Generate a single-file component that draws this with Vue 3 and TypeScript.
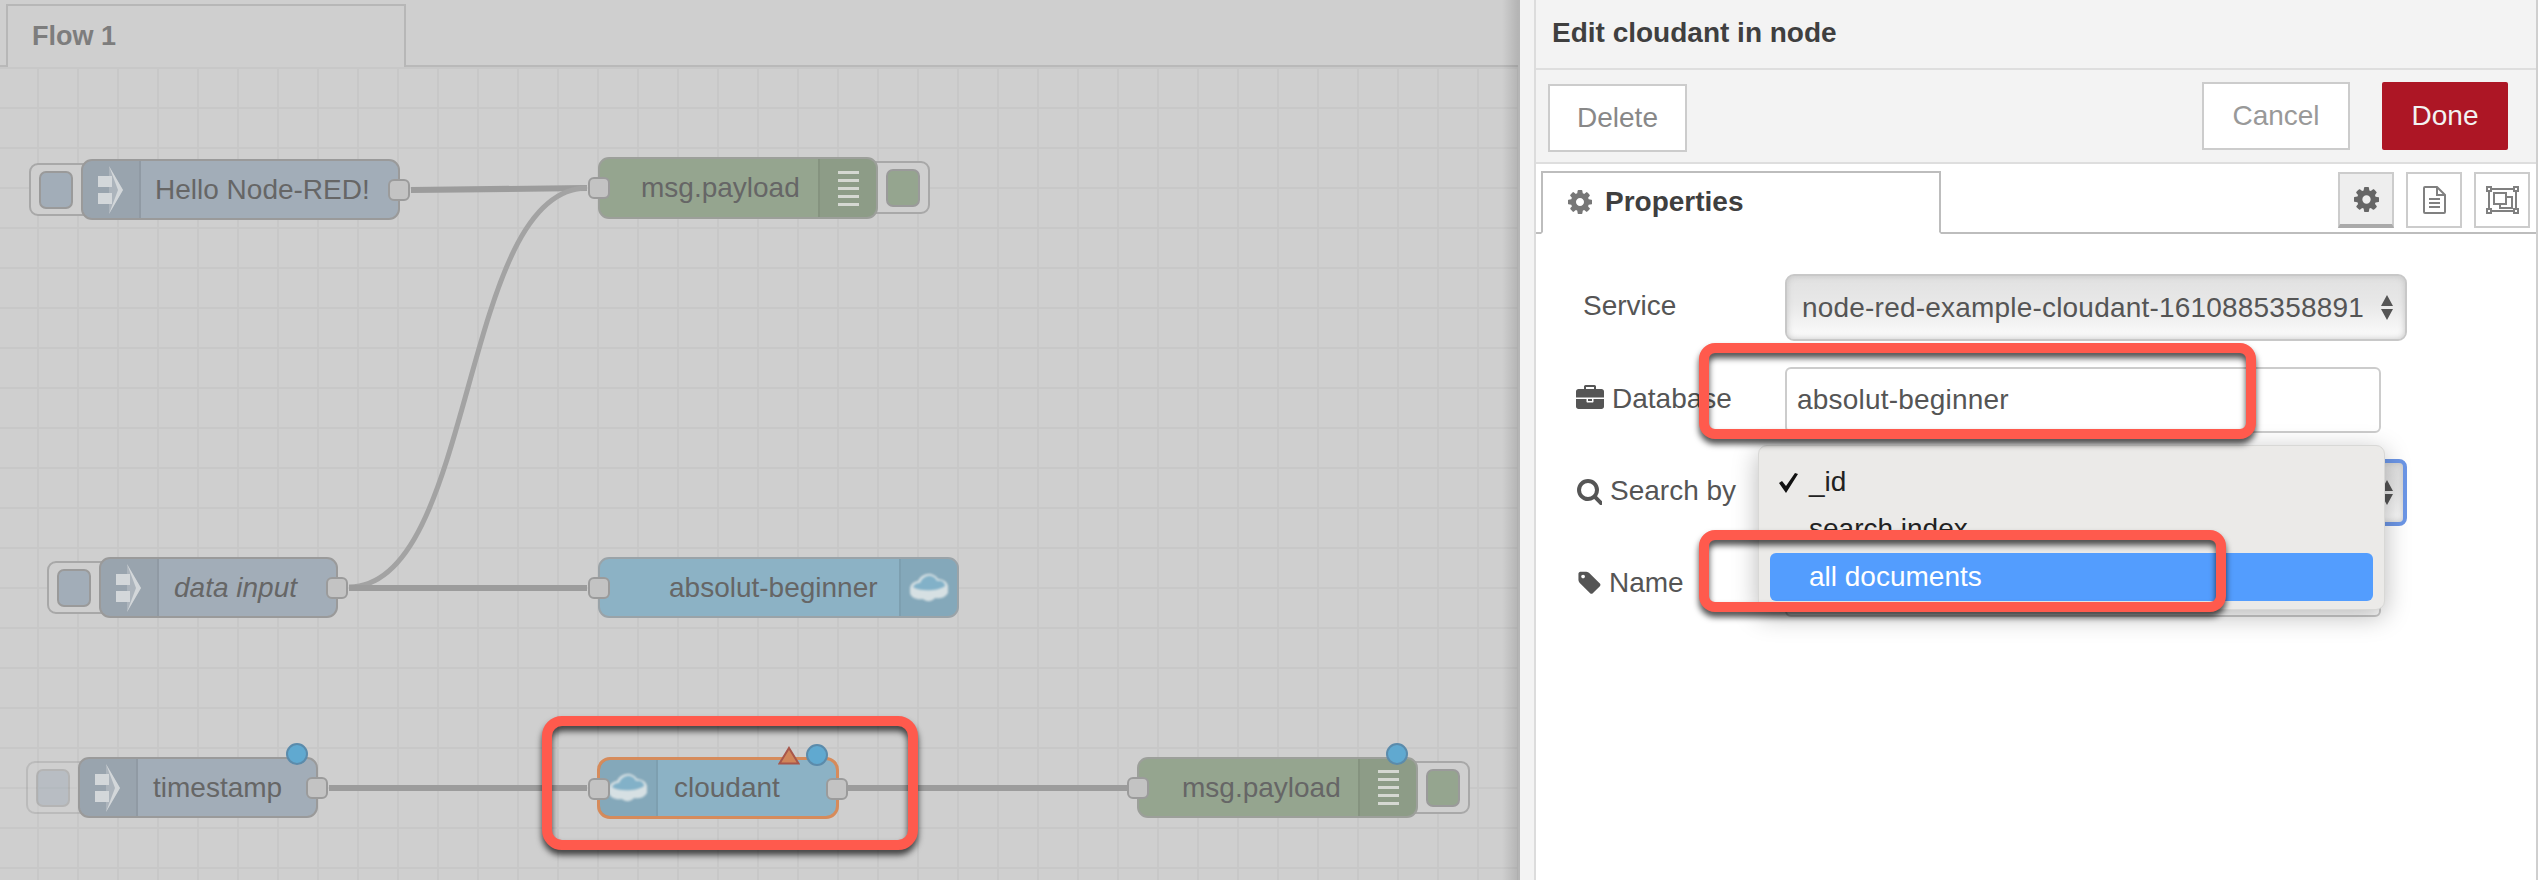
<template>
  <div class="app">
    <div class="canvas">
      <div class="tab-bar">
        <div class="flow-tab">Flow 1</div>
      </div>
      <svg class="wires" width="1520" height="880">
        <path d="M411 190 L587 188" class="wire" />
        <path d="M349 587 C476 587 460 188 587 188" class="wire thin" />
        <path d="M349 588 L587 588" class="wire" />
        <path d="M329 788 L587 788" class="wire" />
        <path d="M848 788 L1127 788" class="wire" />
      </svg>
      <div
        v-for="node in nodes"
        :key="node.id"
        class="node"
        :class="[node.kind, { selected: node.selected }]"
        :style="{ left: node.x + 'px', top: node.y + 'px', width: node.w + 'px', height: node.h + 'px' }"
      >
        <div v-if="node.button" class="node-button" :class="[node.button, { faded: node.faded }]">
          <span class="node-button-inner"></span>
        </div>
        <div v-if="node.iconSide === 'left'" class="icon-cell left">
          <svg v-if="node.icon === 'inject'" width="26" height="48" viewBox="0 0 26 48">
            <path d="M11 0 L25 24 L11 48 Z" fill="#d0d4d8" fill-opacity="0.35" />
            <rect x="0" y="10" width="14" height="11" fill="#d3d7da" />
            <rect x="0" y="27" width="14" height="11" fill="#d3d7da" />
            <path d="M11 0 L25 24 L11 48 L20 24 Z" fill="#d3d7da" />
          </svg>
          <svg v-else class="cloud" width="40" height="30" viewBox="0 0 40 30">
            <path :d="cloudOuter" fill="#d6e0e3" />
            <path :d="cloudInner" fill="#82b1c8" />
          </svg>
        </div>
        <div class="node-label" :class="{ italic: node.italic }" :style="{ paddingLeft: node.textPad + 'px' }">{{ node.label }}</div>
        <div v-if="node.iconSide === 'right'" class="icon-cell right">
          <div v-if="node.icon === 'debug'" class="bars">
            <i v-for="n in 5" :key="n"></i>
          </div>
          <svg v-else class="cloud" width="40" height="30" viewBox="0 0 40 30">
            <path :d="cloudOuter" fill="#d6e0e3" />
            <path :d="cloudInner" fill="#82b1c8" />
          </svg>
        </div>
        <span v-if="node.portIn" class="port in"></span>
        <span v-if="node.portOut" class="port out"></span>
        <svg v-if="node.warn" class="warn" width="22" height="19" viewBox="0 0 22 19">
          <path d="M11 2 L20.5 17.5 L1.5 17.5 Z" fill="#d0855a" stroke="#a8564a" stroke-width="2" />
        </svg>
        <span v-if="node.dot" class="dot"></span>
      </div>
    </div>

    <div class="tray">
      <div class="editor">
        <div class="editor-title">Edit cloudant in node</div>
        <div class="toolbar">
          <button class="btn delete">Delete</button>
          <button class="btn cancel">Cancel</button>
          <button class="btn done">Done</button>
        </div>
        <div class="tabs">
          <div class="tab">
            <svg width="24" height="24" viewBox="128 128 1536 1536"><path :d="cogPath" fill="#777" /></svg>
            <span>Properties</span>
          </div>
          <div class="tab-icons">
            <div class="tab-icon active">
              <svg width="25" height="25" viewBox="128 128 1536 1536"><path :d="cogPath" fill="#666" /></svg>
            </div>
            <div class="tab-icon">
              <svg width="24" height="28" viewBox="0 0 24 28" fill="none" stroke="#808080" stroke-width="2">
                <path d="M3 1H15L23 9V26a1 1 0 0 1-1 1H3a1 1 0 0 1-1-1V2a1 1 0 0 1 1-1Z" />
                <path d="M15 1V9H23" />
                <path d="M7 13H18M7 17H18M7 21H18" />
              </svg>
            </div>
            <div class="tab-icon">
              <svg width="33" height="28" viewBox="0 0 33 28" fill="none" stroke="#808080" stroke-width="2">
                <path d="M5 3H28M5 25H28M3 5V23M30 5V23" />
                <rect x="1" y="1" width="4" height="4" />
                <rect x="28" y="1" width="4" height="4" />
                <rect x="1" y="23" width="4" height="4" />
                <rect x="28" y="23" width="4" height="4" />
                <rect x="8" y="7" width="12" height="11" />
                <path d="M20 11H26V22H14V18" />
              </svg>
            </div>
          </div>
        </div>

        <div class="form">
          <div class="row row-service">
            <label class="label service-label">Service</label>
            <div class="select">
              <span class="wide">node-red-example-cloudant-1610885358891</span>
              <svg width="12" height="25" viewBox="0 0 12 25"><path d="M6 0L12 11H0ZM0 14H12L6 25Z" fill="#555" /></svg>
            </div>
          </div>
          <div class="row row-db">
            <label class="label">
              <svg width="28" height="28" viewBox="0 0 1792 1792"><path :d="briefcasePath" fill="#555" /></svg>
              <span>Database</span>
            </label>
            <div class="input wide">absolut-beginner</div>
          </div>
          <div class="row row-search">
            <label class="label">
              <svg width="26" height="28" viewBox="0 0 1664 1792"><path :d="searchPath" fill="#555" /></svg>
              <span>Search by</span>
            </label>
            <div class="select focused">
              <span></span>
              <svg width="12" height="25" viewBox="0 0 12 25"><path d="M6 0L12 11H0ZM0 14H12L6 25Z" fill="#555" /></svg>
            </div>
          </div>
          <div class="row row-name">
            <label class="label">
              <svg width="25" height="26" viewBox="0 0 1643 1792"><path :d="tagPath" fill="#555" /></svg>
              <span>Name</span>
            </label>
            <div class="input"></div>
          </div>

          <div class="popup">
            <div class="option first">
              <svg class="check" width="21" height="20" viewBox="0 0 21 20"><path d="M1 10L4 8L8 13L17 0L20 1L8 20Z" fill="#111" /></svg>
              _id
            </div>
            <div class="option">search index</div>
            <div class="option hl">all documents</div>
          </div>
        </div>
      </div>
    </div>

    <div class="callout callout-node"></div>
    <div class="callout callout-db"></div>
    <div class="callout callout-option"></div>
  </div>
</template>

<script setup lang="ts">
interface FlowNode {
  id: string
  label: string
  kind: 'slate' | 'green' | 'blue'
  x: number
  y: number
  w: number
  h: number
  textPad: number
  icon: 'inject' | 'debug' | 'cloud'
  iconSide: 'left' | 'right'
  button?: 'btn-left' | 'btn-right'
  portIn?: boolean
  portOut?: boolean
  italic?: boolean
  faded?: boolean
  dot?: boolean
  warn?: boolean
  selected?: boolean
}

const nodes: FlowNode[] = [
  { id: 'hello', label: 'Hello Node-RED!', kind: 'slate', x: 81, y: 159, w: 319, h: 61, textPad: 14, icon: 'inject', iconSide: 'left', button: 'btn-left', portOut: true },
  { id: 'debug1', label: 'msg.payload', kind: 'green', x: 598, y: 157, w: 280, h: 62, textPad: 41, icon: 'debug', iconSide: 'right', button: 'btn-right', portIn: true },
  { id: 'data', label: 'data input', kind: 'slate', x: 99, y: 557, w: 239, h: 61, textPad: 15, icon: 'inject', iconSide: 'left', button: 'btn-left', portOut: true, italic: true },
  { id: 'out', label: 'absolut-beginner', kind: 'blue', x: 598, y: 557, w: 361, h: 61, textPad: 69, icon: 'cloud', iconSide: 'right', portIn: true },
  { id: 'time', label: 'timestamp', kind: 'slate', x: 78, y: 757, w: 240, h: 61, textPad: 15, icon: 'inject', iconSide: 'left', button: 'btn-left', portOut: true, faded: true, dot: true },
  { id: 'cloudant', label: 'cloudant', kind: 'blue', x: 597, y: 757, w: 242, h: 62, textPad: 16, icon: 'cloud', iconSide: 'left', portIn: true, portOut: true, dot: true, warn: true, selected: true },
  { id: 'debug2', label: 'msg.payload', kind: 'green', x: 1137, y: 757, w: 281, h: 61, textPad: 43, icon: 'debug', iconSide: 'right', button: 'btn-right', portIn: true, dot: true },
]

const cloudOuter =
  'M1 15C2 10 6 8 9 8C11 3 17 0 22 1C26 2 28 4 29 6C33 6 38 8 39 13L39 20C36 25 30 26 26 25C23 29 17 29 14 26C8 27 2 25 1 20Z'
const cloudInner =
  'M4 14C6 10 10 10 11 10C13 5 18 2 22 3C26 4 27 6 28 8C32 7 36 9 36 13C30 18 11 19 4 14Z'

// font awesome 4 glyphs
const cogPath =
  'M1152 896q0-106-75-181t-181-75-181 75-75 181 75 181 181 75 181-75 75-181zm512-109v222q0 12-8 23t-20 13l-185 28q-19 54-39 91 35 50 107 138 10 12 10 25t-9 23q-27 37-99 108t-94 71q-12 0-26-9l-138-108q-44 23-91 38-16 136-29 186-7 28-36 28h-222q-14 0-24.5-8.5t-11.5-21.5l-28-184q-49-16-90-37l-141 107q-10 9-25 9-14 0-25-11-126-114-165-168-7-10-7-23 0-12 8-23 15-21 51-66.5t54-70.5q-27-50-41-99l-183-27q-13-2-21-12.5t-8-23.5v-222q0-12 8-23t19-13l186-28q14-46 39-92-40-57-107-138-10-12-10-24 0-10 9-23 26-36 98.5-107.5t94.5-71.5q13 0 26 10l138 107q44-23 91-38 16-136 29-186 7-28 36-28h222q14 0 24.5 8.5t11.5 21.5l28 184q49 16 90 37l142-107q9-9 24-9 13 0 25 10 129 119 165 170 7 8 7 22 0 12-8 23-15 21-51 66.5t-54 70.5q26 50 41 98l183 28q13 2 21 12.5t8 23.5z'
const briefcasePath =
  'M640 256h512v-128h-512v128zm1152 640v480q0 66-47 113t-113 47h-1472q-66 0-113-47t-47-113v-480h672v160q0 26 19 45t45 19h320q26 0 45-19t19-45v-160h672zm-768 0v128h-256v-128h256zm768-480v384h-1792v-384q0-66 47-113t113-47h352v-160q0-40 28-68t68-28h576q40 0 68 28t28 68v160h352q66 0 113 47t47 113z'
const searchPath =
  'M1216 832q0-185-131.5-316.5t-316.5-131.5-316.5 131.5-131.5 316.5 131.5 316.5 316.5 131.5 316.5-131.5 131.5-316.5zm512 832q0 52-38 90t-90 38q-54 0-90-38l-343-342q-179 124-399 124-143 0-273.5-55.5t-225-150-150-225-55.5-273.5 55.5-273.5 150-225 225-150 273.5-55.5 273.5 55.5 225 150 150 225 55.5 273.5q0 220-124 399l343 343q37 37 37 90z'
const tagPath =
  'M576 448q0-53-37.5-90.5t-90.5-37.5-90.5 37.5-37.5 90.5 37.5 90.5 90.5 37.5 90.5-37.5 37.5-90.5zm1067 576q0 53-37 90l-491 492q-39 37-91 37-53 0-90-37l-715-716q-38-37-64.5-101t-26.5-117v-416q0-52 38-90t90-38h416q53 0 117 26.5t102 64.5l715 714q37 39 37 91z'
</script>

<style scoped>
.app {
  position: relative;
  display: flex;
  width: 2548px;
  height: 880px;
  overflow: hidden;
  background: #fff;
  font-family: "Liberation Sans", Arial, sans-serif;
  font-size: 28px;
}

/* canvas */
.canvas {
  position: relative;
  isolation: isolate;
  width: 1520px;
  height: 880px;
  flex-shrink: 0;
  background-color: #cfcfcf;
  background-image:
    linear-gradient(to right, #c8c8c8 2px, transparent 2px),
    linear-gradient(to bottom, #c8c8c8 2px, transparent 2px);
  background-size: 40px 40px;
  background-position: 37px 27px;
}

.canvas::after {
  content: "";
  position: absolute;
  top: 0;
  right: 0;
  width: 18px;
  height: 100%;
  background: linear-gradient(to right, rgba(0, 0, 0, 0), rgba(0, 0, 0, 0.13));
  border-right: 2px solid #b5b5b5;
  box-sizing: border-box;
}

.tab-bar {
  height: 65px;
  padding-left: 6px;
  background: #cfcfcf;
  border-bottom: 2px solid #b9b9b9;
}

.flow-tab {
  box-sizing: border-box;
  width: 400px;
  height: 63px;
  margin-top: 4px;
  padding: 15px 0 0 24px;
  float: left;
  background: #cfcfcf;
  border: 2px solid #b7b7b7;
  border-bottom: none;
  color: #7d7d7d;
  font-weight: bold;
  font-size: 27px;
}

.wires {
  position: absolute;
  top: 0;
  left: 0;
}

.wire {
  fill: none;
  stroke: #9c9c9c;
  stroke-width: 6;
}

.wire.thin {
  stroke: #a3a3a3;
  stroke-width: 5;
}

.node {
  position: absolute;
  box-sizing: border-box;
  display: flex;
  align-items: stretch;
  border: 2px solid #9a9a9a;
  border-radius: 11px;
  color: #666;
}

.node.slate { background: #a2adb8; }
.node.green { background: #95a58f; border-color: #9c9f9a; }
.node.blue { background: #8cb2c5; border-color: #9aa3a8; }
.node.selected { border: 3px solid #d68b5b; border-radius: 13px; }

.icon-cell {
  box-sizing: border-box;
  display: flex;
  align-items: center;
  justify-content: center;
  width: 58px;
  flex-shrink: 0;
  background: rgba(0, 0, 0, 0.05);
}

.icon-cell.left {
  border-right: 2px solid rgba(0, 0, 0, 0.06);
  border-radius: 9px 0 0 9px;
}

.icon-cell.right {
  border-left: 2px solid rgba(0, 0, 0, 0.06);
  border-radius: 0 9px 9px 0;
}

.cloud {
  filter: blur(1px);
}

.bars {
  display: flex;
  flex-direction: column;
  gap: 5px;
}

.bars i {
  display: block;
  width: 21px;
  height: 3px;
  background: #d5d8d2;
}

.node-label {
  flex: 1;
  display: flex;
  align-items: center;
  white-space: nowrap;
}

.italic {
  font-style: italic;
}

.port {
  position: absolute;
  top: 18px;
  box-sizing: border-box;
  width: 22px;
  height: 22px;
  background: #c3c3c3;
  border: 2px solid #9b9b9b;
  border-radius: 6px;
}

.port.in { left: -12px; }
.port.out { right: -12px; }

.node-button {
  position: absolute;
  z-index: -1;
  top: 2px;
  box-sizing: border-box;
  display: flex;
  align-items: center;
  width: 64px;
  height: 53px;
  background: #cfcfcf;
  border: 2px solid #a8a8a8;
  border-radius: 9px;
}

.node-button.btn-left {
  left: -54px;
  padding-left: 8px;
}

.node-button.btn-right {
  right: -54px;
  justify-content: flex-end;
  padding-right: 8px;
}

.node-button-inner {
  box-sizing: border-box;
  display: block;
  width: 34px;
  height: 38px;
  border: 2px solid #9a9a9a;
  border-radius: 7px;
}

.slate .node-button-inner { background: #a2adb8; }
.green .node-button-inner { background: #95a58f; }
.node-button.faded { opacity: 0.5; }

.dot {
  position: absolute;
  top: -16px;
  right: 8px;
  box-sizing: border-box;
  width: 22px;
  height: 22px;
  background: #60a9d0;
  border: 2px solid #5b8bab;
  border-radius: 50%;
}

.warn {
  position: absolute;
  top: -14px;
  right: 36px;
}

/* edit tray */
.tray {
  width: 1018px;
  height: 880px;
  flex-shrink: 0;
  box-sizing: border-box;
  padding-left: 14px;
  background: #f3f3f3;
}

.editor {
  box-sizing: border-box;
  height: 880px;
  background: #fff;
  border-left: 2px solid #dcdcdc;
  border-right: 2px solid #cfcfcf;
}

.editor-title {
  box-sizing: border-box;
  height: 70px;
  padding: 17px 0 0 16px;
  background: #f3f3f3;
  border-bottom: 2px solid #dedede;
  color: #3f3f3f;
  font-weight: bold;
}

.toolbar {
  box-sizing: border-box;
  display: flex;
  height: 94px;
  padding: 12px 28px 0 12px;
  background: #f3f3f3;
  border-bottom: 2px solid #dedede;
}

.btn {
  box-sizing: border-box;
  height: 68px;
  background: #fff;
  border: 2px solid #ccc;
  font-family: inherit;
  font-size: 28px;
  color: #888;
  padding: 0;
}

.delete {
  width: 139px;
  margin-top: 2px;
}

.cancel {
  width: 148px;
  margin-left: auto;
  color: #999;
}

.done {
  width: 126px;
  margin-left: 32px;
  background: #ad1625;
  border: none;
  border-radius: 2px;
  color: #f2f2f2;
}

.tabs {
  box-sizing: border-box;
  display: flex;
  height: 70px;
  padding: 7px 6px 0 5px;
  border-bottom: 2px solid #bdbdbd;
}

.tab {
  box-sizing: border-box;
  display: flex;
  align-items: center;
  gap: 13px;
  width: 400px;
  height: 63px;
  padding: 0 0 2px 25px;
  background: #fff;
  border: 2px solid #bdbdbd;
  border-bottom: 2px solid #fff;
  color: #3f3f3f;
  font-weight: bold;
}

.tab-icons {
  display: flex;
  gap: 12px;
  margin-left: auto;
  height: 56px;
  margin-top: 1px;
}

.tab-icon {
  box-sizing: border-box;
  display: flex;
  align-items: center;
  justify-content: center;
  width: 56px;
  height: 56px;
  border: 2px solid #ccc;
}

.tab-icon.active {
  background: #eee;
  border-bottom: 4px solid #aaa;
}

.form {
  position: relative;
  display: flex;
  flex-direction: column;
  gap: 26px;
  padding: 40px 0 0 40px;
  color: #555;
}

.row {
  display: flex;
  align-items: center;
}

.row-service { height: 67px; }
.row-db { height: 66px; }
.row-search { height: 67px; }
.row-name { height: 65px; }

.label {
  display: flex;
  align-items: center;
  gap: 8px;
  width: 209px;
  flex-shrink: 0;
  white-space: nowrap;
  margin-top: -3px;
}

.service-label {
  padding-left: 7px;
  box-sizing: border-box;
}

.wide {
  letter-spacing: 0.2px;
}

.select {
  box-sizing: border-box;
  display: flex;
  align-items: center;
  justify-content: space-between;
  width: 622px;
  height: 100%;
  padding: 0 12px 0 15px;
  background: linear-gradient(#e1e1e1, #e8e8e8 45%, #fcfcfc);
  border: 2px solid #c8c8c8;
  border-radius: 9px;
  box-shadow: inset 0 0 6px #c4c4c4;
  white-space: nowrap;
}

.select.focused {
  border: 4px solid #6c96e6;
  border-radius: 8px;
  padding-right: 10px;
}

.input {
  box-sizing: border-box;
  display: flex;
  align-items: center;
  width: 596px;
  height: 100%;
  padding-left: 10px;
  background: #fff;
  border: 2px solid #ccc;
  border-radius: 6px;
}

.popup {
  position: absolute;
  top: 211px;
  left: 222px;
  box-sizing: border-box;
  width: 627px;
  height: 165px;
  padding: 13px 11px 0;
  background: #ebeae8;
  border: 1px solid #d8d8d6;
  border-radius: 9px;
  box-shadow: 0 6px 26px rgba(0, 0, 0, 0.28);
  color: #222;
}

.option {
  position: relative;
  display: flex;
  align-items: center;
  height: 46.5px;
  padding-left: 39px;
}

.option.first {
  gap: 0;
}

.check {
  position: absolute;
  left: 8px;
  top: 14px;
}

.option.hl {
  height: 48px;
  margin-top: 1px;
  background: #539dfe;
  border-radius: 6px;
  color: #fff;
}

/* red annotation frames */
.callout {
  position: absolute;
  box-sizing: border-box;
  border: 10px solid #ff5a4d;
  border-radius: 16px;
  filter: drop-shadow(0 5px 3px rgba(0, 0, 0, 0.7));
}

.callout-node {
  left: 542px;
  top: 716px;
  width: 376px;
  height: 134px;
  border-radius: 20px;
}

.callout-db {
  left: 1699px;
  top: 343px;
  width: 557px;
  height: 96px;
}

.callout-option {
  left: 1699px;
  top: 530px;
  width: 527px;
  height: 82px;
}
</style>
